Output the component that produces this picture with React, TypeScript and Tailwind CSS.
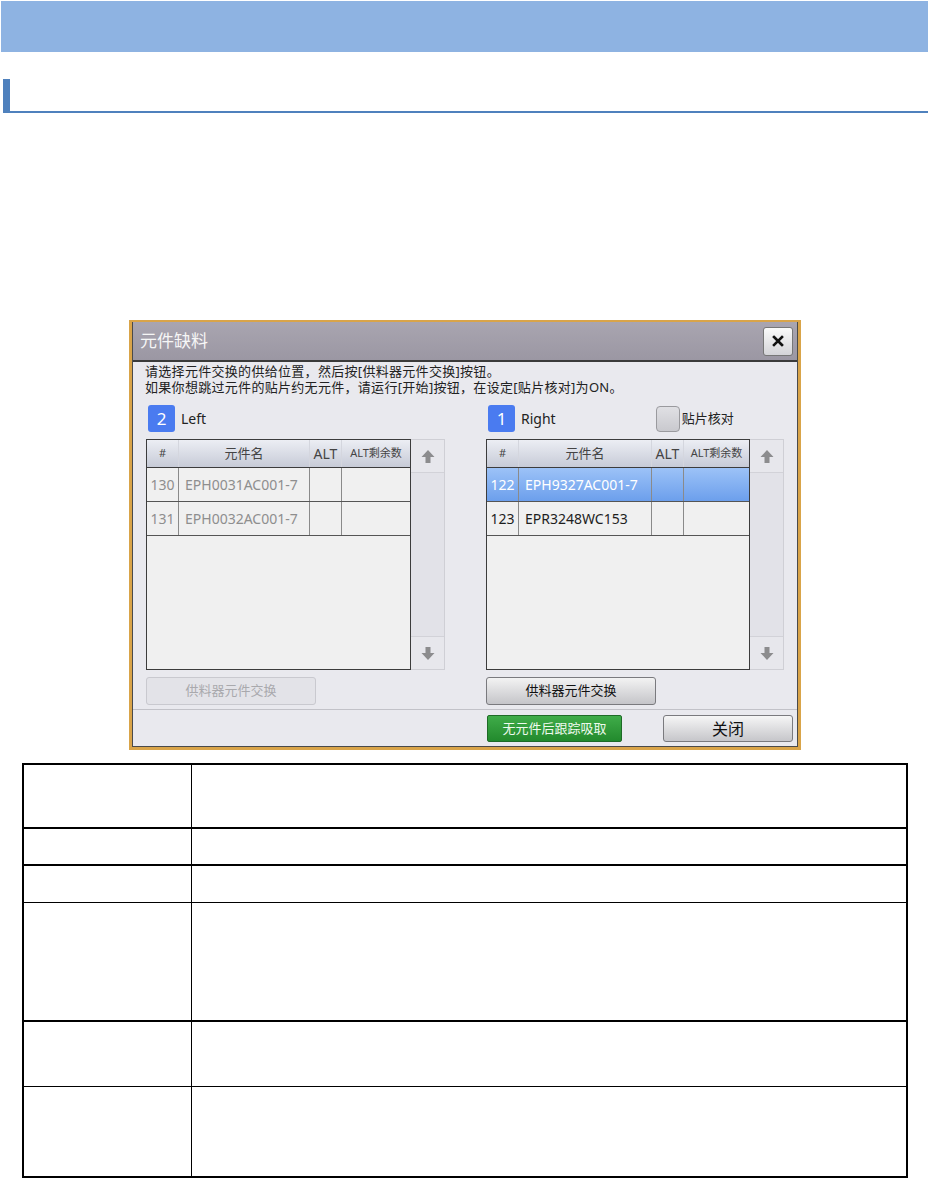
import React from 'react';

type Row = { no: string; name: string; selected?: boolean };

const font = 'font-["Noto_Sans","Noto_Sans_CJK_SC",sans-serif]';

function ArrowIcon({ down = false }: { down?: boolean }) {
  return (
    <svg width="14" height="15" viewBox="0 0 14 15" className={down ? 'rotate-180' : ''}>
      <path d="M7 1 L13.5 8 H9.5 V14 H4.5 V8 H0.5 Z" fill="#8c8c8e" />
    </svg>
  );
}

function PartTable({ rows, disabled, nameW }: { rows: Row[]; disabled?: boolean; nameW: string }) {
  return (
    <div className="flex h-[231px]">
      <div className="flex-1 flex flex-col border border-[#3c3c3c] bg-[#f0f0f0]">
        <div className="flex h-[28px] shrink-0 border-b border-[#3c3c3c] bg-gradient-to-b from-[#eceef4] to-[#c7cbd7] text-[#444]">
          <div className="w-[32px] flex items-center justify-center text-[11px] border-r border-[#d4d6de]">#</div>
          <div className={`${nameW} flex items-center justify-center text-[13px] border-r border-[#d4d6de]`}>元件名</div>
          <div className="w-[32px] flex items-center justify-center text-[14px] border-r border-[#d4d6de]">ALT</div>
          <div className="flex-1 flex items-center justify-center text-[11px]">ALT剩余数</div>
        </div>
        {rows.map((r) => (
          <div
            key={r.no}
            className={
              'flex h-[34px] shrink-0 border-b border-[#555] text-[14px] ' +
              (r.selected
                ? 'bg-gradient-to-b from-[#9cc2f7] to-[#6c9fec] text-white'
                : disabled
                ? 'text-[#8e8e8e]'
                : 'text-[#1e1e1e]')
            }
          >
            <div className="w-[32px] flex items-center justify-center border-r border-[#8a8a8a]">{r.no}</div>
            <div className={`${nameW} flex items-center pl-[6px] border-r border-[#8a8a8a]`}>{r.name}</div>
            <div className="w-[32px] border-r border-[#8a8a8a]" />
            <div className="flex-1" />
          </div>
        ))}
      </div>
      <div className="w-[34px] flex flex-col justify-between border border-l-0 border-[#cfcfd5] bg-[#e2e2e8]">
        <div className="h-[33px] flex items-center justify-center border-b border-[#d2d2d8] bg-[#e7e7ec]">
          <ArrowIcon />
        </div>
        <div className="h-[33px] flex items-center justify-center border-t border-[#d2d2d8] bg-[#e7e7ec]">
          <ArrowIcon down />
        </div>
      </div>
    </div>
  );
}

function Badge({ n }: { n: string }) {
  return (
    <div className="w-[27px] h-[27px] rounded-[3px] bg-[#4a7bf0] text-white text-[17px] flex items-center justify-center">
      {n}
    </div>
  );
}

export default function App() {
  const leftRows: Row[] = [
    { no: '130', name: 'EPH0031AC001-7' },
    { no: '131', name: 'EPH0032AC001-7' },
  ];
  const rightRows: Row[] = [
    { no: '122', name: 'EPH9327AC001-7', selected: true },
    { no: '123', name: 'EPR3248WC153' },
  ];

  return (
    <div className={`w-[930px] h-[1179px] bg-white overflow-hidden ${font}`}>
      {/* header band */}
      <div className="mt-px ml-px w-[927px] h-[51px] bg-[#8eb3e2]" />

      {/* section heading */}
      <div className="mt-[27px] ml-[3px] w-[925px] h-[34px] flex border-b-2 border-[#4f81bd]">
        <div className="w-[7px] h-full bg-[#4f81bd]" />
      </div>

      {/* dialog screenshot */}
      <div className="mt-[207px] ml-[129px] w-[672px] h-[430px] bg-[#d9a449] pl-[3px] pr-[3px] pt-[2px] pb-[3px]">
        <div className="h-full flex flex-col bg-[#e9e9ee] border border-t-0 border-[#4a4a4a]">
          <div className="h-[40px] shrink-0 flex items-center justify-between pl-[7px] pr-[4px] border-b-2 border-[#3a3a3a] bg-gradient-to-b from-[#a9a5b0] to-[#9b97a3]">
            <span className="text-[17px] text-[#f6f6f6]">元件缺料</span>
            <button className="w-[30px] h-[29px] rounded-[3px] border border-[#777] bg-gradient-to-b from-[#fafafa] to-[#d4d4d8] flex items-center justify-center">
              <svg width="12" height="12" viewBox="0 0 12 12">
                <path d="M2 2 L10 10 M10 2 L2 10" stroke="#111" strokeWidth="2.6" strokeLinecap="square" />
              </svg>
            </button>
          </div>

          <div className="flex-1 flex flex-col pl-[12px] pt-[1px]">
            <div className="text-[13px] leading-[16px] tracking-[0.3px] text-[#222]">
              <div>请选择元件交换的供给位置，然后按[供料器元件交换]按钮。</div>
              <div>如果你想跳过元件的贴片约无元件，请运行[开始]按钮，在设定[贴片核对]为ON。</div>
            </div>

            <div className="mt-[10px] flex gap-[41px] pl-px">
              {/* left */}
              <div className="w-[299px] flex flex-col">
                <div className="h-[27px] flex items-center pl-[2px] gap-[6px]">
                  <Badge n="2" />
                  <span className="text-[14px] text-[#222]">Left</span>
                </div>
                <div className="mt-[7px]">
                  <PartTable rows={leftRows} disabled nameW="w-[131px]" />
                </div>
                <button className="mt-[7px] w-[170px] h-[28px] rounded-[3px] border border-[#c9c9cf] bg-[#e3e3e8] text-[13px] text-[#a9a9ad]">
                  供料器元件交换
                </button>
              </div>

              {/* right */}
              <div className="w-[298px] flex flex-col">
                <div className="h-[27px] flex items-center pl-[2px]">
                  <Badge n="1" />
                  <span className="ml-[6px] text-[14px] text-[#222]">Right</span>
                  <div className="ml-[100px] w-[24px] h-[26px] rounded-[4px] border border-[#9a9a9e] bg-gradient-to-b from-[#e0e0e4] to-[#c9c9ce]" />
                  <span className="ml-[2px] text-[13px] text-[#222]">贴片核对</span>
                </div>
                <div className="mt-[7px]">
                  <PartTable rows={rightRows} nameW="w-[133px]" />
                </div>
                <button className="mt-[7px] w-[170px] h-[28px] rounded-[3px] border border-[#7a7a7e] bg-gradient-to-b from-[#f3f3f3] to-[#c5c5c9] text-[13px] text-[#111]">
                  供料器元件交换
                </button>
              </div>
            </div>
          </div>

          <div className="h-px bg-[#c2c2c8]" />
          <div className="h-[36px] shrink-0 flex items-start pt-[5px] pl-[354px]">
            <button className="w-[135px] h-[27px] rounded-[2px] border border-[#1f6b27] bg-gradient-to-b from-[#3fac49] to-[#228a2d] text-[13px] text-[#eefaee]">
              无元件后跟踪吸取
            </button>
            <button className="ml-[41px] w-[130px] h-[27px] rounded-[3px] border border-[#7a7a7e] bg-gradient-to-b from-[#f6f6f6] to-[#c6c6ca] text-[16px] text-[#111]">
              关闭
            </button>
          </div>
        </div>
      </div>

      {/* description table */}
      <div className="mt-[13px] ml-[22px] w-[886px] h-[415px] border-2 border-black flex flex-col">
        {[
          { h: 'h-[64px]', b: 'border-b-2' },
          { h: 'h-[37px]', b: 'border-b-2' },
          { h: 'h-[37px]', b: 'border-b' },
          { h: 'h-[119px]', b: 'border-b-2' },
          { h: 'h-[65px]', b: 'border-b' },
          { h: 'flex-1', b: '' },
        ].map((r, i) => (
          <div key={i} className={`${r.h} ${r.b} border-black flex`}>
            <div className="w-[168px] border-r border-black" />
            <div className="flex-1" />
          </div>
        ))}
      </div>
    </div>
  );
}
